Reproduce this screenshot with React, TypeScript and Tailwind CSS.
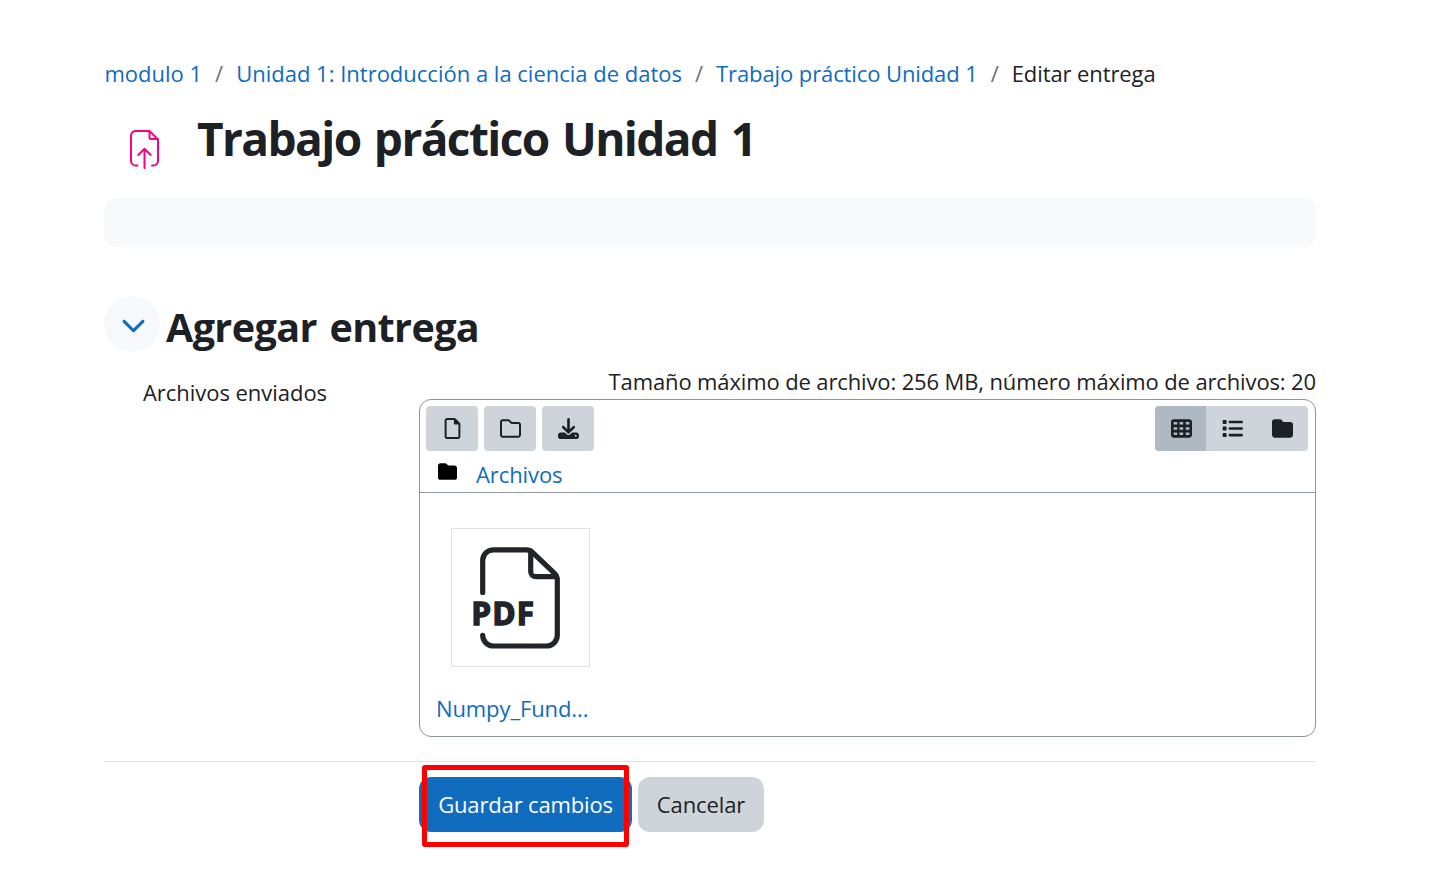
import type { ReactNode } from "react";
import {
  FaChevronDown,
  FaDownload,
  FaFolder,
  FaList,
  FaRegFile,
  FaRegFolder,
  FaTableCells,
} from "react-icons/fa6";

function Separator() {
  return <span className="w-[34px] text-center text-[#6a737b]">/</span>;
}

function AssignmentIcon() {
  return (
    <svg width="32" height="42" viewBox="0 0 32 42" fill="none" stroke="#f90086" strokeWidth="2" strokeLinecap="round" strokeLinejoin="round">
      <path d="M9.500 37.500H8a4.500 4.500 0 0 1-5-4.500V7A4.500 4.500 0 0 1 8 3h13.500l8.500 8.500v21.500a4.500 4.500 0 0 1-5 4.500H24" />
      <path d="M21.500 3.500v6a1.500 1.500 0 0 0 1.500 1.500H29.500M16.500 40V20.800M10.300 27l6.200-6.200 6.200 6.200" />
    </svg>
  );
}

function PdfIcon() {
  return (
    <svg width="137" height="137" viewBox="0 0 137 137" fill="none" stroke="#212529" strokeWidth="5.200" strokeLinecap="round" strokeLinejoin="round">
      <path d="M30.700 63.500V31.500a10.700 10.700 0 0 1 10.700-10.700H74.500q3.500 0 6 2.500L102.500 44.300q2.800 2.700 2.800 6.500V106.300a10.700 10.700 0 0 1-10.700 10.700H41.400a10.700 10.700 0 0 1-10.700-10.700" />
      <path d="M78.700 22v20.500a5.200 5.200 0 0 0 5.200 5.200H104" />
      <text x="19.500" y="95.500" fill="#212529" stroke="#212529" strokeWidth="1.500" strokeLinejoin="miter" textLength="64" lengthAdjust="spacingAndGlyphs" className="font-['Noto_Sans',sans-serif] text-[32px] font-bold tracking-[1.500px]">PDF</text>
    </svg>
  );
}

function ToolButton({ label, children }: { label: string; children: ReactNode }) {
  return (
    <button aria-label={label} className="flex h-[45px] w-[52px] items-center justify-center rounded-[4px] bg-[#ced4da]">
      {children}
    </button>
  );
}

export default function App() {
  return (
    <main className="h-[882px] w-[1447px] overflow-hidden bg-white pl-[104px] font-['Open_Sans',sans-serif] text-[22px] text-[#1d2125]">
      <div className="w-[1212px]">
        <nav className="mt-14 flex h-[34px] items-center whitespace-nowrap leading-[34px]">
          <a className="pl-[0.5px] text-[#0f6cbf]">modulo 1</a>
          <Separator />
          <a className="text-[#0f6cbf]">Unidad 1: Introducción a la ciencia de datos</a>
          <Separator />
          <a className="tracking-[-0.1px] text-[#0f6cbf]">Trabajo práctico Unidad 1</a>
          <Separator />
          <span className="tracking-[-0.1px]">Editar entrega</span>
        </nav>

        <header className="flex h-[108px] items-start">
          <div className="ml-6 mt-[38px] w-[69px]">
            <AssignmentIcon />
          </div>
          <h1 className="mt-[18px] whitespace-nowrap text-[46px] font-bold leading-[60px] tracking-[-1.600px] [word-spacing:3px]">Trabajo práctico Unidad 1</h1>
        </header>

        <div className="h-[49px] rounded-[12px] bg-[#f8f9fa]" />

        <section>
          <div className="mt-[49px] flex h-14 items-center">
            <button aria-label="Contraer" className="flex size-14 items-center justify-center rounded-full bg-[#f5f9fc] pl-[3px] text-[#0f6cbf]">
              <FaChevronDown size={25} />
            </button>
            <h2 className="ml-1.5 mt-[6px] whitespace-nowrap text-[39.500px] font-bold leading-[50px] tracking-[-0.600px] [word-spacing:3px]">Agregar entrega</h2>
          </div>

          <div className="flex pt-[13px]">
            <div className="w-[315px] pl-[39px] pt-[10px] leading-[34px]">
              <span className="tracking-[-0.04px]">Archivos enviados</span>
            </div>
            <div className="flex-1">
              <p className="-mt-px h-[35px] whitespace-nowrap text-right leading-[34px] tracking-[-0.13px]">
                Tamaño máximo de archivo: 256 MB, número máximo de archivos: 20
              </p>
              <div className="h-[338px] rounded-[12px] border border-[#8f959e]">
                <div className="h-[93px] border-b border-[#8f959e]">
                  <div className="flex justify-between pl-1.5 pr-[7px] pt-1.5">
                    <div className="flex gap-1.5">
                      <ToolButton label="Agregar"><FaRegFile size={21} /></ToolButton>
                      <ToolButton label="Crear carpeta"><FaRegFolder size={21} /></ToolButton>
                      <ToolButton label="Descargar"><FaDownload size={21} /></ToolButton>
                    </div>
                    <div className="flex h-[45px] overflow-hidden rounded-[4px] bg-[#ced4da]">
                      <button aria-label="Iconos" className="flex w-[51px] items-center justify-center bg-[#afb9c2] pl-[2px]"><FaTableCells size={21} /></button>
                      <button aria-label="Lista" className="flex w-[51px] items-center justify-center pl-px"><FaList size={21} /></button>
                      <button aria-label="Carpetas" className="flex w-[51px] items-center justify-center"><FaFolder size={21} /></button>
                    </div>
                  </div>
                  <div className="flex pl-[18px]">
                    <FaFolder size={19} className="mt-[11px] text-black" />
                    <a className="ml-[19px] mt-[6px] leading-[34px] tracking-[-0.1px] text-[#0f6cbf]">Archivos</a>
                  </div>
                </div>
                <div className="pl-[31px] pt-[35px]">
                  <div className="size-[139px] border border-[#dee2e6]">
                    <PdfIcon />
                  </div>
                  <a className="-ml-[15px] mt-6 block leading-[34px] tracking-[-0.1px] text-[#0f6cbf]">Numpy_Fund...</a>
                </div>
              </div>
            </div>
          </div>
        </section>

        <footer className="mt-6 flex border-t border-[#dee2e6] pl-[315px] pt-[15px]">
          <div className="relative">
            <button className="h-[55px] w-[213px] whitespace-nowrap rounded-[12px] bg-[#0f6cbf] tracking-[-0.15px] text-white">Guardar cambios</button>
            <div className="absolute -top-3 left-[3px] h-[82px] w-[207px] rounded-[3px] border-[5px] border-[#ff0000]" />
          </div>
          <button className="ml-1.5 h-[55px] w-[126px] rounded-[12px] bg-[#ced4da] tracking-[-0.1px]">Cancelar</button>
        </footer>
      </div>
    </main>
  );
}
